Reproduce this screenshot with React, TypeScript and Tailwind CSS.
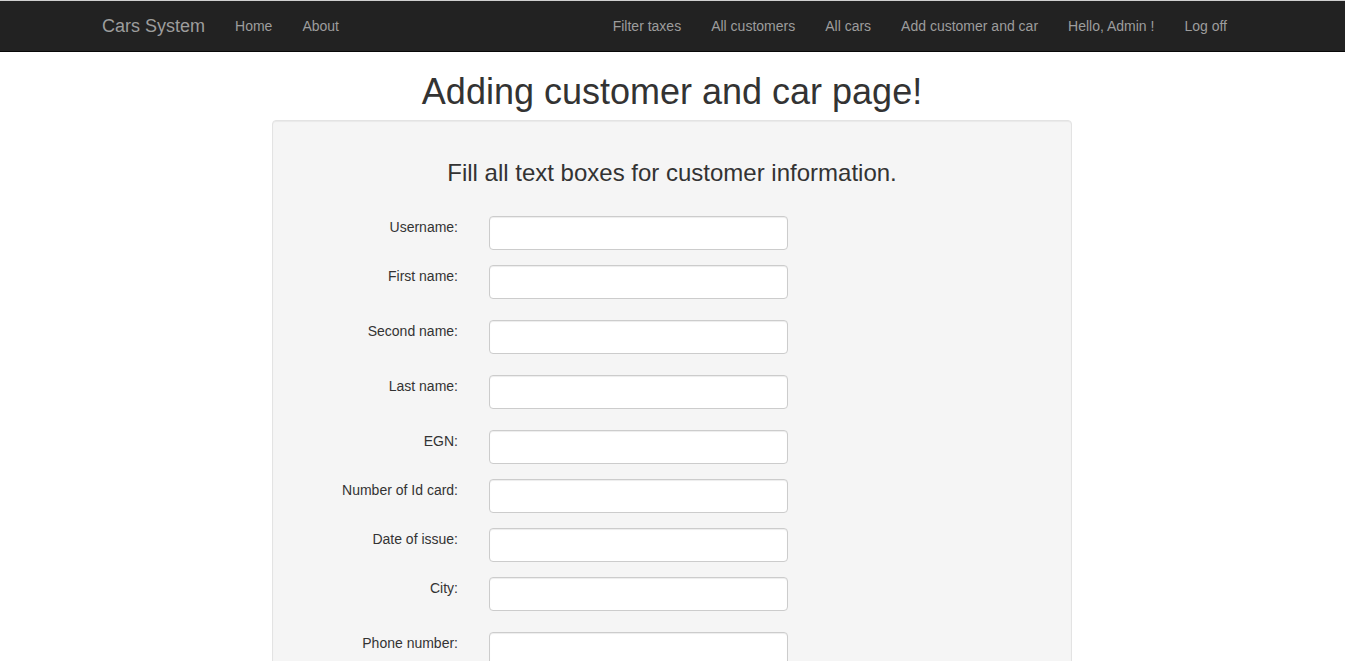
const LEFT_LINKS = ["Home", "About"];
const RIGHT_LINKS = ["Filter taxes", "All customers", "All cars", "Add customer and car", "Hello, Admin !", "Log off"];

// gap below each field, measured from the screenshot
const FIELDS: { label: string; gap: string }[] = [
  { label: "Username:", gap: "mb-[15px]" },
  { label: "First name:", gap: "mb-[21px]" },
  { label: "Second name:", gap: "mb-[21px]" },
  { label: "Last name:", gap: "mb-[21px]" },
  { label: "EGN:", gap: "mb-[15px]" },
  { label: "Number of Id card:", gap: "mb-[15px]" },
  { label: "Date of issue:", gap: "mb-[15px]" },
  { label: "City:", gap: "mb-[21px]" },
  { label: "Phone number:", gap: "mb-[15px]" },
  { label: "Email:", gap: "mb-[15px]" },
];

export default function App() {
  return (
    <div className="min-h-screen bg-white text-[14px] leading-[20px] text-[#333] font-['Liberation_Sans',Arial,sans-serif]">
      <nav className="h-[52px] border-t border-t-[#d0d0d0] border-b border-b-[#080808] bg-[#222]">
        <div className="ml-[87px] flex w-[1170px] px-[15px]">
          <a className="py-[15px] pr-[15px] text-[18px] leading-[20px] text-[#9d9d9d]">Cars System</a>
          <ul className="flex">
            {LEFT_LINKS.map((l) => (
              <li key={l}>
                <a className="block px-[15px] py-[15px] text-[#9d9d9d]">{l}</a>
              </li>
            ))}
          </ul>
          <ul className="ml-auto flex">
            {RIGHT_LINKS.map((l) => (
              <li key={l}>
                <a className="block px-[15px] py-[15px] text-[#9d9d9d]">{l}</a>
              </li>
            ))}
          </ul>
        </div>
      </nav>

      <main className="ml-[87px] w-[1170px] px-[15px]">
        <h1 className="mt-[20px] mb-[8px] text-center text-[36px] leading-[39.6px] font-medium">
          Adding customer and car page!
        </h1>
        <div className="mx-auto w-[800px] rounded-[4px] border border-[#e3e3e3] bg-[#f5f5f5] p-[19px] shadow-[inset_0_1px_1px_rgba(0,0,0,0.05)]">
          <h3 className="mt-[20px] mb-[10px] text-center text-[24px] leading-[26.4px] font-medium">
            Fill all text boxes for customer information.
          </h3>
          <form className="pt-[20px]">
            {FIELDS.map((f) => (
              <div key={f.label} className={`flex items-start ${f.gap}`}>
                <label className="w-[166px] pt-[1px] text-right">{f.label}</label>
                <input
                  type="text"
                  className="ml-[31px] h-[34px] w-[299px] rounded-[4px] border border-[#ccc] bg-white px-3 shadow-[inset_0_1px_1px_rgba(0,0,0,0.075)] outline-none"
                />
              </div>
            ))}
          </form>
        </div>
      </main>
    </div>
  );
}
